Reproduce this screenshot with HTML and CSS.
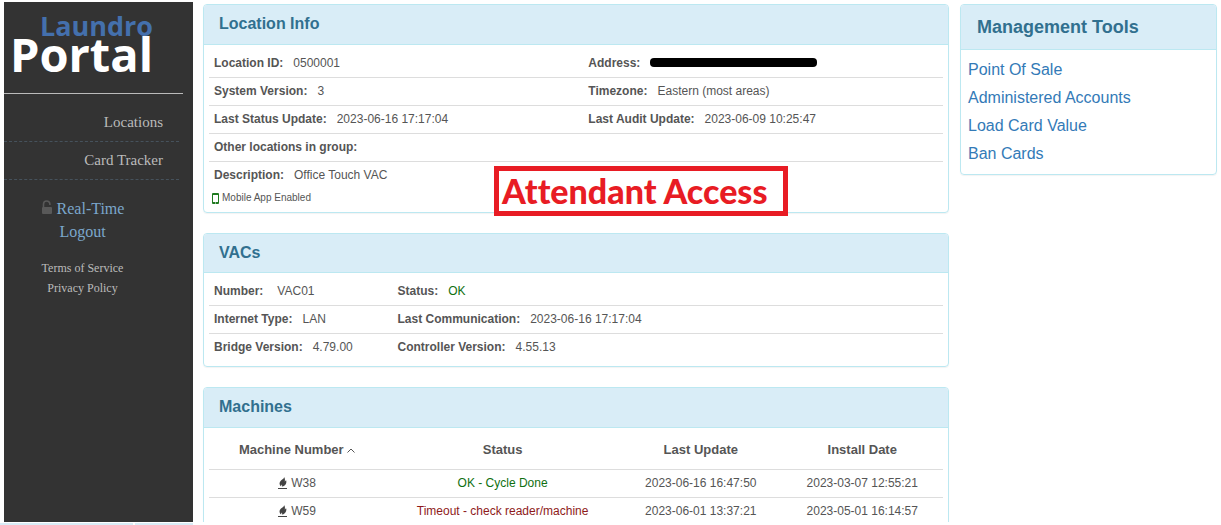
FILE: index.html
```html
<!DOCTYPE html>
<html lang="en">
<head>
<meta charset="utf-8">
<title>Laundro Portal</title>
<link rel="stylesheet" href="styles.css">
</head>
<body>
<svg class="symbols" aria-hidden="true">
  <symbol id="fire" viewBox="0 0 10 12">
    <path d="M6 0C6.4 1.4 4.6 2.2 3 3.5C1 5.3 1 8 3.2 9.6C3 8.5 3.3 7.9 3.8 7.4C3.9 8.4 4.5 9 4.2 9.8C7.4 8.8 9.2 6 8 3C7.7 3.9 7.3 4.4 6.7 4.6C7.1 3 7.1 1.2 6 0Z"/>
    <path d="M0 11H9V12H0Z"/>
  </symbol>
</svg>
<div class="page">
  <aside class="sidebar">
    <div class="logo"><span class="logo-top">Laundro</span><span class="logo-bottom">Portal</span></div>
    <nav class="nav">
      <a href="#">Locations</a>
      <a href="#">Card Tracker</a>
    </nav>
    <div class="session">
      <a href="#"><svg class="lock" viewBox="0 0 12 14" aria-hidden="true"><path d="M2.5 7V4.2A3.2 3.2 0 0 1 8.9 4.2V5" fill="none" stroke="currentColor" stroke-width="1.6"/><rect x="1" y="7" width="10" height="7" rx="1" fill="currentColor"/></svg> Real-Time</a>
      <a href="#">Logout</a>
    </div>
    <div class="legal">
      <a href="#">Terms of Service</a>
      <a href="#">Privacy Policy</a>
    </div>
  </aside>
  <main class="content">
    <section class="panel">
      <h2 class="panel-title">Location Info</h2>
      <div class="panel-body">
        <dl class="rows halves">
          <div class="row">
            <div class="pair"><dt>Location ID:</dt><dd>0500001</dd></div>
            <div class="pair"><dt>Address:</dt><dd><span class="redacted" role="img" aria-label="Hidden address"></span></dd></div>
          </div>
          <div class="row">
            <div class="pair"><dt>System Version:</dt><dd>3</dd></div>
            <div class="pair"><dt>Timezone:</dt><dd>Eastern (most areas)</dd></div>
          </div>
          <div class="row">
            <div class="pair"><dt>Last Status Update:</dt><dd>2023-06-16 17:17:04</dd></div>
            <div class="pair"><dt>Last Audit Update:</dt><dd>2023-06-09 10:25:47</dd></div>
          </div>
          <div class="row">
            <div class="pair"><dt>Other locations in group:</dt><dd></dd></div>
          </div>
          <div class="row">
            <div class="pair"><dt>Description:</dt><dd>Office Touch VAC</dd></div>
          </div>
        </dl>
        <p class="mobile"><svg class="phone" viewBox="0 0 7 11" aria-hidden="true"><rect width="7" height="11" rx="1" fill="#1f7a1f"/><path d="M1 2H6V9H1Z" fill="#fff"/><path d="M3 10H4" stroke="#fff"/></svg>Mobile App Enabled</p>
      </div>
      <div class="callout">Attendant Access</div>
    </section>
    <section class="panel compact">
      <h2 class="panel-title">VACs</h2>
      <div class="panel-body">
        <dl class="rows quarters">
          <div class="row">
            <div class="pair wide"><dt>Number:</dt><dd>VAC01</dd></div>
            <div class="pair"><dt>Status:</dt><dd class="ok">OK</dd></div>
          </div>
          <div class="row">
            <div class="pair"><dt>Internet Type:</dt><dd>LAN</dd></div>
            <div class="pair"><dt>Last Communication:</dt><dd>2023-06-16 17:17:04</dd></div>
          </div>
          <div class="row">
            <div class="pair"><dt>Bridge Version:</dt><dd>4.79.00</dd></div>
            <div class="pair"><dt>Controller Version:</dt><dd>4.55.13</dd></div>
          </div>
        </dl>
      </div>
    </section>
    <section class="panel">
      <h2 class="panel-title">Machines</h2>
      <div class="panel-body">
        <table class="machines">
          <colgroup><col class="col-number"><col class="col-status"><col class="col-date"><col class="col-date"></colgroup>
          <thead>
            <tr><th>Machine Number <svg class="caret" viewBox="0 0 8 5" aria-hidden="true"><path d="M0.5 4.5L4 1L7.5 4.5" fill="none" stroke="currentColor"/></svg></th><th>Status</th><th>Last Update</th><th>Install Date</th></tr>
          </thead>
          <tbody>
            <tr><td><svg class="fire" aria-hidden="true"><use href="#fire"/></svg>W38</td><td class="ok">OK - Cycle Done</td><td>2023-06-16 16:47:50</td><td>2023-03-07 12:55:21</td></tr>
            <tr><td><svg class="fire" aria-hidden="true"><use href="#fire"/></svg>W59</td><td class="error">Timeout - check reader/machine</td><td>2023-06-01 13:37:21</td><td>2023-05-01 16:14:57</td></tr>
          </tbody>
        </table>
      </div>
    </section>
  </main>
  <aside class="tools panel">
    <h2 class="panel-title">Management Tools</h2>
    <nav class="tool-links">
      <a href="#">Point Of Sale</a>
      <a href="#">Administered Accounts</a>
      <a href="#">Load Card Value</a>
      <a href="#">Ban Cards</a>
    </nav>
  </aside>
</div>
<footer class="strip"><span></span><span></span></footer>
</body>
</html>
```
FILE: styles.css
```css
* { box-sizing: border-box; }

body {
  margin: 0;
  height: 100vh;
  display: flex;
  flex-direction: column;
  overflow: hidden;
  background: #fff;
  color: #555;
  font: 12px/16px "Liberation Sans", Arial, sans-serif;
}

a { text-decoration: none; }
h2, dl, dd, p { margin: 0; }
.symbols { display: none; }

.page {
  flex: 1;
  min-height: 0;
  display: grid;
  grid-template-columns: 189px minmax(0, 1fr) 257px;
  padding: 2px 4px 0;
  overflow: hidden;
}

/* Sidebar */
.sidebar {
  background: #333;
  font-family: "Liberation Serif", "Times New Roman", serif;
}

.logo {
  display: flex;
  flex-direction: column;
  height: 92px;
  margin-right: 10px;
  padding: 10px 30px 0 0;
  border-bottom: 1px solid #bbb;
  text-align: right;
  font-family: "Open Sans", "Noto Sans", sans-serif;
  font-weight: 700;
}

.logo-top { color: #4470ad; font-size: 27px; line-height: 28px; }
.logo-bottom { color: #fff; font-size: 47px; line-height: 28px; }

.nav a {
  display: block;
  margin-right: 14px;
  padding: 9px 16px 10px 0;
  border-bottom: 1px dashed #46525c;
  color: #bbb;
  font-size: 15px;
  line-height: 18px;
  text-align: right;
}

.nav a:first-child { padding-top: 19px; }

.session, .legal {
  display: flex;
  flex-direction: column;
  align-items: center;
  margin-right: 32px;
}

.session { padding-top: 17px; font-size: 16px; line-height: 23px; }
.session a { color: #7ba7cb; }
.lock { width: 12px; height: 14px; color: #595959; }
.legal { padding-top: 15px; line-height: 20px; }
.legal a { color: #bbb; }

/* Panels */
.content {
  display: flex;
  flex-direction: column;
  gap: 20px;
  min-height: 0;
  padding: 2px 11px 0 10px;
  overflow: hidden;
}

.panel {
  position: relative;
  flex: none;
  border: 1px solid #bce8f1;
  border-radius: 4px;
  box-shadow: 0 1px 1px rgba(0, 0, 0, 0.05);
}

.panel-title {
  padding: 9px 15px 10px;
  border-bottom: 1px solid #bce8f1;
  border-radius: 3px 3px 0 0;
  background: #d9edf7;
  color: #31708f;
  font-size: 16px;
  line-height: 20px;
}

.compact .panel-title { padding-bottom: 9px; }

.panel-body { padding: 5px; }

.row {
  display: grid;
  padding: 5px 0;
  border-bottom: 1px solid #ddd;
  line-height: 17px;
}

.row:last-child { border-bottom: 0; }
.halves .row { grid-template-columns: 51% 1fr; }
.quarters .row { grid-template-columns: 25% 1fr; }

.pair { display: flex; gap: 10px; padding-left: 5px; white-space: nowrap; }
.wide { gap: 14px; }
dt { font-weight: 700; }

.redacted {
  display: inline-block;
  width: 167px;
  height: 9px;
  border-radius: 4px;
  background: #000;
}

.ok { color: #107010; }
.error { color: #8e1a1a; }

.mobile {
  display: flex;
  align-items: center;
  gap: 3px;
  padding-left: 3px;
  font-size: 10px;
  line-height: 18px;
}

.phone { width: 7px; height: 11px; }

.callout {
  position: absolute;
  right: 160px;
  bottom: -4px;
  width: 294px;
  padding: 0 3px;
  border: 5px solid #e81c24;
  background: #fff;
  color: #e81c24;
  font: 900 34px/40px Lato, "Open Sans", sans-serif;
  font-variant-ligatures: none;
  white-space: nowrap;
}

/* Machine table */
.machines {
  width: 100%;
  border-collapse: collapse;
  table-layout: fixed;
  text-align: center;
}

.col-number { width: 24%; }
.col-status { width: 32%; }
.col-date { width: 22%; }

th, td { padding: 5px 0; border-bottom: 1px solid #ddd; line-height: 17px; }
th { padding: 8px 0 10px; font-size: 13px; }
thead th { height: 36px; }
.caret { width: 8px; height: 5px; vertical-align: 1px; }
.fire { width: 10px; height: 12px; margin-right: 3px; vertical-align: -2px; fill: #444; }

/* Management tools */
.tools { align-self: start; margin-top: 2px; }
.tools .panel-title { padding: 12px 16px; font-size: 18px; }
.tool-links {
  display: flex;
  flex-direction: column;
  padding: 6px 7px;
  font-size: 16px;
  line-height: 28px;
}
.tool-links a { color: #337ab7; }

.strip { display: flex; gap: 2px; width: 193px; height: 3px; padding-top: 1px; }
.strip span { flex: 58; background: #d9edf7; }
.strip span:first-child { flex: 133; }
```
